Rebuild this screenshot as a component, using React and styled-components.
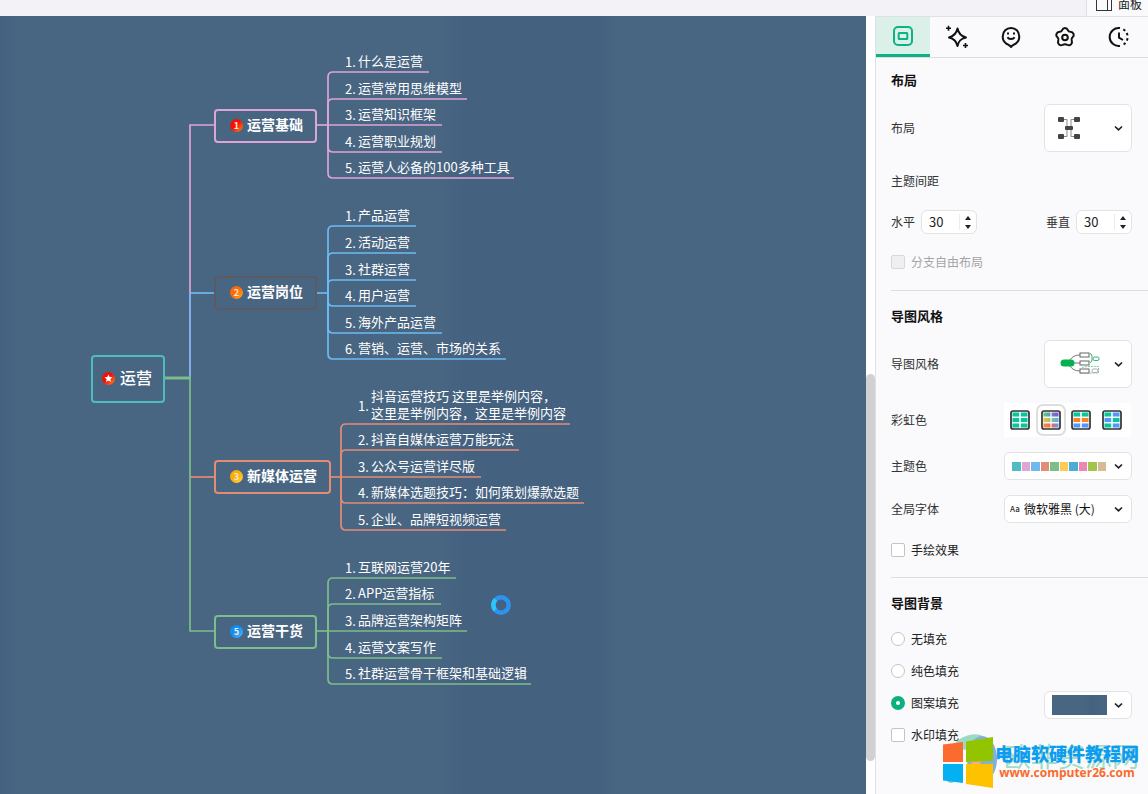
import React, { useState } from "react";
import styled, { createGlobalStyle } from "styled-components";

const GlobalStyle = createGlobalStyle`
  * {
    box-sizing: border-box;
  }
  body {
    margin: 0;
    background: #fafafc;
    color: #333;
    font-family: "Noto Sans CJK SC", "Liberation Sans", sans-serif;
    font-size: 12px;
  }
  button, input, select {
    font: inherit;
    color: inherit;
  }
`;

const Page = styled.div`
  display: flex;
  flex-direction: column;
  min-height: 100vh;
`;

const TopBar = styled.header`
  display: flex;
  justify-content: flex-end;
  align-items: flex-end;
  height: 16px;
  overflow: hidden;
  background: #f3f2f7;
`;

const PanelButton = styled.button`
  display: flex;
  flex-shrink: 0;
  align-items: center;
  gap: 6px;
  height: 25px;
  padding: 0 6px 0 9px;
  border: 0;
  border-left: 1px solid #dfdfe3;
  background: #fafafc;
  color: #222;
`;

const Main = styled.main`
  display: flex;
  flex: 1;
`;

/* ---------- mind map ---------- */

const Canvas = styled.section`
  position: relative;
  flex: 1;
  min-width: 0;
  overflow: hidden;
  background: linear-gradient(
    90deg,
    #446180 0,
    #486582 20px,
    #486582 440px,
    #446180 464px,
    #446180 600px,
    #486582 620px
  );
  color: #fff;
`;

const Lines = styled.svg`
  position: absolute;
  inset: 0;
  width: 100%;
  height: 100%;
  fill: none;
  stroke-width: 1.7;
`;

const Node = styled.div`
  position: absolute;
  left: ${(p) => p.$x}px;
  top: ${(p) => p.$y}px;
  display: flex;
  align-items: center;
  gap: ${(p) => (p.$root ? 5 : 4)}px;
  height: ${(p) => (p.$root ? 48 : 34)}px;
  padding: ${(p) => (p.$root ? "0 11px 1px 9px" : "0 12px 1px 14px")};
  border: 2px solid ${(p) => p.$color};
  border-radius: 4px;
  font-size: ${(p) => (p.$root ? 16 : 14)}px;
  font-weight: ${(p) => (p.$root ? 500 : 700)};
  white-space: nowrap;
`;

const NodeText = styled.span`
  padding-bottom: 3px;
`;

const Badge = styled.span`
  display: flex;
  align-items: center;
  justify-content: center;
  width: 13px;
  height: 13px;
  border-radius: 50%;
  background: linear-gradient(135deg, ${(p) => p.$from} 45%, ${(p) => p.$to});
  color: #ffe9dc;
  font-size: 9px;
  font-weight: 700;
  line-height: 13px;
`;

const Leaf = styled.div`
  position: absolute;
  left: ${(p) => p.$x}px;
  top: ${(p) => p.$y}px;
  display: flex;
  align-items: center;
  height: ${(p) => p.$h}px;
  font-size: 13px;
  line-height: 17px;
  white-space: pre;
`;

const LeafNumber = styled.span`
  width: 13px;
  padding-top: 2px;
`;

const Busy = styled.svg`
  position: absolute;
  left: 490px;
  top: 578px;
`;

const ScrollTrack = styled.div`
  display: flex;
  flex-direction: column;
  width: 9px;
  padding-top: 358px;
  background: #fff;
`;

const ScrollThumb = styled.div`
  height: 387px;
  border-radius: 5px;
  background: #d1d1d4;
`;

/* ---------- side panel ---------- */

const Side = styled.aside`
  position: relative;
  width: 273px;
  border-left: 1px solid #e1e1e5;
  background: #fafafc;
`;

const Tabs = styled.nav`
  display: flex;
  height: 42px;
  border-top: 1px solid #e1e1e5;
  border-bottom: 1px solid #dedee2;
`;

const Tab = styled.button`
  display: flex;
  align-items: center;
  justify-content: center;
  width: 54px;
  padding: 3px 0 0;
  border: 0;
  border-bottom: 3px solid ${(p) => (p.$active ? "#0ab380" : "transparent")};
  background: ${(p) => (p.$active ? "#dcf0ea" : "none")};
  color: ${(p) => (p.$active ? "#0bb583" : "#111")};
`;

const Section = styled.section`
  margin-left: 15px;
  padding: 15px 16px 17px 0;
  border-bottom: 1px solid #dedee2;
  &:first-of-type {
    padding: 12px 16px 18px 0;
  }
  &:last-of-type {
    border-bottom: 0;
  }
`;

const Title = styled.h2`
  margin: 0;
  color: #111;
  font-size: 13px;
  font-weight: 700;
  line-height: 20px;
`;

const Row = styled.div`
  display: flex;
  align-items: center;
  justify-content: space-between;
  min-height: 20px;
  margin-top: ${(p) => p.$gap || 15}px;
  line-height: 20px;
`;

const FillRow = styled(Row)`
  align-items: flex-end;
  height: 32px;
  margin-top: 0;
`;

const Field = styled.div`
  display: flex;
  align-items: center;
  gap: 6px;
`;

const Stepper = styled.div`
  display: flex;
  width: 56px;
  height: 24px;
  border: 1px solid #e3e3e6;
  border-radius: 6px;
  background: #fff;
`;

const StepInput = styled.input`
  flex: 1;
  min-width: 0;
  margin: 3px 0;
  padding: 0 0 0 7px;
  border: 0;
  border-right: 1px solid #ececef;
  background: none;
  color: #222;
  font-size: 13px;
  outline: 0;
`;

const StepButtons = styled.div`
  display: flex;
  flex-direction: column;
  width: 16px;
  padding: 2px 0;
`;

const StepButton = styled.button`
  display: flex;
  flex: 1;
  align-items: center;
  justify-content: center;
  padding: 0;
  border: 0;
  background: none;
`;

const Picker = styled.button`
  display: flex;
  align-items: center;
  justify-content: space-between;
  width: ${(p) => (p.$wide ? 128 : 88)}px;
  height: ${(p) => (p.$tall ? 48 : 28)}px;
  padding: 0 8px 0 ${(p) => (p.$tall ? 13 : 7)}px;
  border: 1px solid #e3e3e6;
  border-radius: 6px;
  background: #fff;
  color: #222;
`;

const FontBox = styled.div`
  display: flex;
  align-items: center;
  width: 128px;
  height: 28px;
  padding: 0 8px 0 5px;
  border: 1px solid #e3e3e6;
  border-radius: 6px;
  background: #fff;
  color: #111;
`;

const FontMark = styled.span`
  width: 14px;
  color: #333;
  font-size: 8px;
  font-weight: 500;
`;

const FontSelect = styled.select`
  flex: 1;
  min-width: 0;
  padding: 0;
  border: 0;
  appearance: none;
  background: none;
  outline: 0;
`;

const Swatches = styled.span`
  display: flex;
  gap: 1px;
  width: 94px;
  height: 9px;
`;

const Swatch = styled.span`
  flex: 1;
  background: ${(p) => p.$color};
`;

const Pattern = styled.span`
  width: 55px;
  height: 20px;
  background: linear-gradient(90deg, #486582 60%, #446180 70%, #486582);
`;

const RainbowGroup = styled.div`
  display: flex;
  justify-content: space-between;
  width: 127px;
  height: 34px;
  margin-right: 1px;
  padding: 1px 4px 1px 1px;
  background: #fff;
`;

const RainbowItem = styled.label`
  position: relative;
  display: flex;
  align-items: center;
  justify-content: center;
  width: 30px;
  border: 2px solid ${(p) => (p.$active ? "#dededf" : "transparent")};
  border-radius: 7px;
`;

const HiddenRadio = styled.input`
  position: absolute;
  inset: 0;
  margin: 0;
  opacity: 0;
`;

const Check = styled.label`
  display: flex;
  align-items: center;
  gap: 6px;
  height: ${(p) => (p.$fill ? 32 : 20)}px;
  color: ${(p) => (p.$muted ? "#a4a4a6" : "#222")};
`;

const Box = styled.input`
  appearance: none;
  width: 14px;
  height: 14px;
  margin: 0;
  border: 1px solid #c4c4c8;
  border-radius: ${(p) => (p.type === "radio" ? "50%" : "2px")};
  background: #fff;
  &:disabled {
    border-color: #d8d8da;
    background: #efefef;
  }
  &:checked {
    border: 5px solid #0cb07c;
  }
`;

const Watermark = styled.div`
  position: absolute;
  right: 9px;
  top: 716px;
  display: flex;
  align-items: flex-start;
  gap: 2px;
  pointer-events: none;
`;

const WatermarkText = styled.div`
  position: relative;
  display: flex;
  flex-direction: column;
  align-items: center;
  padding-top: 10px;
  white-space: nowrap;
`;

const WatermarkGhost = styled.span`
  position: absolute;
  right: 0;
  top: 8px;
  color: #a3dcc6;
  font-size: 27px;
  line-height: 32px;
`;

const WatermarkName = styled.strong`
  position: relative;
  color: #0d9df0;
  font-size: 18px;
  font-weight: 900;
  line-height: 22px;
`;

const WatermarkUrl = styled.strong`
  position: relative;
  color: #fa6a2c;
  font-family: "Open Sans", "Liberation Sans", sans-serif;
  font-size: 12px;
  line-height: 18px;
`;

const pink = "#dda5d5";
const blue = "#6cbaf2";
const orange = "#e38c74";
const green = "#7dbd8a";
const teal = "#4fbdbf";

// y is the underline of a leaf, end is where that underline stops
const branches = [
  {
    title: "运营基础", mark: "1", from: "#f01208", to: "#ff8a1c",
    color: pink, top: 93, right: 317, spine: 328, mid: 109,
    leaves: [
      { text: "什么是运营", y: 56, end: 429 },
      { text: "运营常用思维模型", y: 83, end: 467 },
      { text: "运营知识框架", y: 109, end: 442 },
      { text: "运营职业规划", y: 136, end: 442 },
      { text: "运营人必备的100多种工具", y: 162, end: 514 },
    ],
  },
  {
    title: "运营岗位", mark: "2", from: "#fb6a08", to: "#ffae1c",
    color: blue, border: "#5a5b65", top: 260, right: 317, spine: 328, mid: 277,
    leaves: [
      { text: "产品运营", y: 210, end: 416 },
      { text: "活动运营", y: 237, end: 416 },
      { text: "社群运营", y: 264, end: 416 },
      { text: "用户运营", y: 290, end: 416 },
      { text: "海外产品运营", y: 317, end: 442 },
      { text: "营销、运营、市场的关系", y: 343, end: 506 },
    ],
  },
  {
    title: "新媒体运营", mark: "3", from: "#fbae08", to: "#ffd84a",
    color: orange, top: 444, right: 331, spine: 341, mid: 461,
    leaves: [
      { text: "抖音运营技巧 这里是举例内容，\n这里是举例内容，这里是举例内容", y: 408, end: 570, lines: 2 },
      { text: "抖音自媒体运营万能玩法", y: 434, end: 519 },
      { text: "公众号运营详尽版", y: 461, end: 481 },
      { text: "新媒体选题技巧：如何策划爆款选题", y: 487, end: 584 },
      { text: "企业、品牌短视频运营", y: 514, end: 506 },
    ],
  },
  {
    title: "运营干货", mark: "5", from: "#0d8ff5", to: "#56bbff",
    color: green, top: 599, right: 317, spine: 328, mid: 615,
    leaves: [
      { text: "互联网运营20年", y: 562, end: 456 },
      { text: "APP运营指标", y: 588, end: 441 },
      { text: "品牌运营架构矩阵", y: 615, end: 467 },
      { text: "运营文案写作", y: 642, end: 442 },
      { text: "社群运营骨干框架和基础逻辑", y: 668, end: 531 },
    ],
  },
];

const leafPath = (b, leaf) => {
  if (Math.abs(leaf.y - b.mid) < 3) return `M${b.spine} ${leaf.y}H${leaf.end}`;
  const bend = leaf.y < b.mid ? 5 : -5;
  return `M${b.spine} ${b.mid}V${leaf.y + bend}Q${b.spine} ${leaf.y} ${b.spine + 5} ${leaf.y}H${leaf.end}`;
};

const MindMap = () => (
  <Canvas>
    <Lines>
      <path d="M190 362V109H214" stroke={pink} />
      <path d="M190 362V277" stroke="#86acea" strokeWidth="2" />
      <path d="M190 277H214" stroke={blue} />
      <path d="M190 461H214" stroke={orange} />
      <path d="M190 362V615H214" stroke={green} />
      <path d="M165 362H191" stroke={green} strokeWidth="3" />
      {branches.map((b) => (
        <g key={b.title} stroke={b.color}>
          <path d={`M${b.right} ${b.mid}H${b.spine}`} />
          {b.leaves.map((leaf) => (
            <path key={leaf.y} d={leafPath(b, leaf)} />
          ))}
        </g>
      ))}
    </Lines>
    <Node $root $x={91} $y={339} $color={teal}>
      <Badge $from="#f01208" $to="#ff8a1c">
        <svg width="9" height="9" viewBox="0 0 10 10" fill="#fff">
          <path d="M5 .5l1.3 2.9 3.1.3-2.3 2.1.7 3.1L5 7.3 2.2 8.9l.7-3.1L.6 3.7l3.1-.3z" />
        </svg>
      </Badge>
      <NodeText>运营</NodeText>
    </Node>
    {branches.map((b) => (
      <React.Fragment key={b.title}>
        <Node $x={214} $y={b.top} $color={b.border || b.color}>
          <Badge $from={b.from} $to={b.to}>{b.mark}</Badge>
          <NodeText>{b.title}</NodeText>
        </Node>
        {b.leaves.map((leaf, i) => {
          const height = leaf.lines === 2 ? 36 : 20;
          return (
            <Leaf key={leaf.y} $x={b.spine + 17} $y={leaf.y - height - 2} $h={height}>
              <LeafNumber>{i + 1}.</LeafNumber>
              <span>{leaf.text}</span>
            </Leaf>
          );
        })}
      </React.Fragment>
    ))}
    <Busy width="22" height="22" viewBox="0 0 22 22" fill="none" strokeWidth="4.5">
      <circle cx="11" cy="11" r="7.7" stroke="#2c93ef" />
      <path d="M5.2 16A7.7 7.7 0 0 1 5.6 5.5" stroke="#2cc6f8" />
    </Busy>
  </Canvas>
);

const Chevron = () => (
  <svg width="9" height="7" viewBox="0 0 9 7" fill="none" stroke="#222" strokeWidth="1.7">
    <path d="M1 1.5l3.5 3.3L8 1.5" />
  </svg>
);

const tabs = [
  {
    name: "布局",
    icon: (
      <>
        <rect x="2" y="1" width="18" height="18" rx="4" />
        <rect x="6.7" y="7" width="8.6" height="6" rx=".5" />
      </>
    ),
  },
  {
    name: "主题",
    icon: (
      <>
        <path d="M11.5 2.5c1 5 3 7.5 8.5 9-5.5 1.3-7.5 3.5-8.5 8.5-1-5-3.500-7.200-8.500-8.500 5-1.500 7.500-4 8.500-9z" strokeLinejoin="round" />
        <path d="M2.500-.2v5M0 2.300h5M19.500 17v5M17 19.500h5" strokeWidth="1.600" />
      </>
    ),
  },
  {
    name: "图标",
    icon: (
      <>
        <path d="M11 21c-1-1.600-3-2.300-4.700-3.400A8.200 8.200 0 0 1 2.800 10 8 8 0 0 1 11 2a8 8 0 0 1 8.200 8 8.200 8.200 0 0 1-3.500 7.600C14 18.700 12 19.400 11 21z" strokeLinejoin="round" />
        <path d="M7.500 11.200c1.200 2.500 5.800 2.500 7 0" />
        <path d="M8 6.500v2M14 6.500v2" />
      </>
    ),
  },
  {
    name: "样式",
    icon: (
      <>
        <path d="M8 4.300c1.200-3 4.800-3 6 0 .4 1 1.200 1.500 2.300 1.500 3.300.1 4.600 3.500 2.300 5.500-.9.800-1.200 1.700-.9 2.800 1.200 3.800-1.500 6-4.300 4.800-1.500-.7-3.300-.7-4.800 0-2.800 1.200-5.500-1-4.300-4.800.3-1.100 0-2-.9-2.800C1.100 9.300 2.400 5.900 5.700 5.800 6.800 5.800 7.600 5.300 8 4.300z" />
        <circle cx="11" cy="11.500" r="2.800" />
      </>
    ),
  },
  {
    name: "历史",
    icon: (
      <>
        <path d="M12 2.100a9 9 0 1 0 0 17.800" />
        <path d="M15.300 3.300a9 9 0 0 1 .1 15.300" strokeDasharray="2.500 2.600" />
        <path d="M11 6.500v5.200l4 2.300" />
      </>
    ),
  },
];

const Tile = ({ id, fills }) => (
  <svg width="20" height="20" viewBox="0 0 20 20">
    <defs>
      <linearGradient id={`${id}-a`}><stop offset="0" stopColor="#4fcf87" /><stop offset="1" stopColor="#8d4be0" /></linearGradient>
      <linearGradient id={`${id}-b`}><stop offset="0" stopColor="#efc52c" /><stop offset="1" stopColor="#45b3f5" /></linearGradient>
      <linearGradient id={`${id}-c`}><stop offset="0" stopColor="#ff8a3c" /><stop offset=".5" stopColor="#f4644e" /><stop offset="1" stopColor="#6f95f5" /></linearGradient>
    </defs>
    <rect x="1" y="1" width="18" height="18" rx="2" fill="#eefaf7" stroke="#333" strokeWidth="1.7" />
    {fills.map(([left, right], i) => (
      <g key={i}>
        {left === "rainbow" ? (
          <rect x="2.5" y={2.5 + i * 5.5} width="15" height="4" fill={`url(#${id}-${"abc"[i]})`} />
        ) : (
          <>
            <rect x="2.5" y={2.5 + i * 5.5} width="7" height="4" fill={left} />
            <rect x="10.5" y={2.5 + i * 5.5} width="7" height="4" fill={right} />
          </>
        )}
      </g>
    ))}
    <path d="M10 2v16" stroke="#fff" strokeWidth="1.2" />
  </svg>
);

const mint = "#08c59c";
const sky = "#5795fb";
const amber = "#ff8322";
const rainbows = [
  { name: "单色", fills: [[mint, mint], [mint, mint], [mint, mint]] },
  { name: "彩虹", fills: [["rainbow"], ["rainbow"], ["rainbow"]] },
  { name: "三色", fills: [[mint, mint], [amber, amber], [sky, sky]] },
  { name: "双色", fills: [[mint, sky], [sky, mint], [mint, sky]] },
];

const themeColors = [
  "#4fbdbf", "#dfa6d3", "#6fb9ee", "#e38c74", "#7dbd8a",
  "#fdca55", "#4badd3", "#ec86b4", "#a0c44c", "#d7bb93",
];

const NumberField = ({ id, label }) => {
  const [value, setValue] = useState(30);
  return (
    <Field>
      <label htmlFor={id}>{label}</label>
      <Stepper>
        <StepInput id={id} value={value} onChange={(e) => setValue(Number(e.target.value) || 0)} />
        <StepButtons>
          <StepButton aria-label={`${label}+`} onClick={() => setValue(value + 1)}>
            <svg width="6" height="4" viewBox="0 0 6 4"><path d="M0 4l3-4 3 4z" fill="#222" /></svg>
          </StepButton>
          <StepButton aria-label={`${label}-`} onClick={() => setValue(value - 1)}>
            <svg width="6" height="4" viewBox="0 0 6 4"><path d="M0 0l3 4 3-4z" fill="#222" /></svg>
          </StepButton>
        </StepButtons>
      </Stepper>
    </Field>
  );
};

const LayoutIcon = () => (
  <svg width="22" height="22" viewBox="0 0 22 22">
    <path d="M5 2.5h4v17H5M17 2.5h-4v17h4" fill="none" stroke="#888" />
    <g fill="#444">
      <rect x="0" y="0" width="6" height="5" rx="1" />
      <rect x="16" y="0" width="6" height="5" rx="1" />
      <rect x="0" y="17" width="6" height="5" rx="1" />
      <rect x="16" y="17" width="6" height="5" rx="1" />
      <rect x="7" y="9" width="8" height="4" rx="1" />
    </g>
  </svg>
);

const StyleIcon = () => (
  <svg width="42" height="24" viewBox="0 0 42 24" fill="none">
    <path d="M12 8Q15 3 22 3M14 11h8M12 14Q15 19 22 19" stroke="#777" />
    <path d="M24 15.5Q30 14 40.5 14.5V21H22" stroke="#6cc795" strokeDasharray="2 1" />
    <path d="M32 1.5q2 0 2 3v3q0 3-2 3" stroke="#2fb36e" />
    <rect x="2.5" y="7.5" width="14" height="7" rx="3.5" fill="#06b050" />
    <g fill="#fff">
      <rect x="22" y="1" width="9" height="4" stroke="#666" />
      <rect x="22" y="9" width="9" height="4" stroke="#666" />
      <rect x="22" y="17" width="9" height="4" stroke="#666" />
      <rect x="35" y="5" width="6" height="3.5" rx="1.5" stroke="#2fb36e" />
      <rect x="34" y="17" width="6" height="3.5" rx="1.5" stroke="#aaa" />
    </g>
  </svg>
);

const SidePanel = () => {
  const [tab, setTab] = useState("布局");
  const [rainbow, setRainbow] = useState("彩虹");
  const [fill, setFill] = useState("图案填充");

  return (
    <Side>
      <Tabs>
        {tabs.map((t) => (
          <Tab key={t.name} $active={t.name === tab} aria-label={t.name} onClick={() => setTab(t.name)}>
            <svg width="22" height="22" viewBox="0 0 22 22" fill="none" stroke="currentColor" strokeWidth="2" overflow="visible">
              {t.icon}
            </svg>
          </Tab>
        ))}
      </Tabs>
      <Section>
        <Title>布局</Title>
        <Row $gap={14}>
          <span>布局</span>
          <Picker $tall aria-label="布局" aria-haspopup="listbox"><LayoutIcon /><Chevron /></Picker>
        </Row>
        <Row $gap={19}>主题间距</Row>
        <Row $gap={19}>
          <NumberField id="gap-x" label="水平" />
          <NumberField id="gap-y" label="垂直" />
        </Row>
        <Row $gap={18}>
          <Check $muted><Box type="checkbox" disabled />分支自由布局</Check>
        </Row>
      </Section>
      <Section>
        <Title>导图风格</Title>
        <Row $gap={14}>
          <span>导图风格</span>
          <Picker $tall aria-label="导图风格" aria-haspopup="listbox"><StyleIcon /><Chevron /></Picker>
        </Row>
        <Row>
          <span>彩虹色</span>
          <RainbowGroup role="radiogroup" aria-label="彩虹色">
            {rainbows.map((r, i) => (
              <RainbowItem key={r.name} $active={r.name === rainbow}>
                <HiddenRadio
                  type="radio"
                  name="rainbow"
                  aria-label={r.name}
                  checked={r.name === rainbow}
                  onChange={() => setRainbow(r.name)}
                />
                <Tile id={`tile${i}`} fills={r.fills} />
              </RainbowItem>
            ))}
          </RainbowGroup>
        </Row>
        <Row>
          <span>主题色</span>
          <Picker $wide aria-label="主题色" aria-haspopup="listbox">
            <Swatches>
              {themeColors.map((c) => <Swatch key={c} $color={c} />)}
            </Swatches>
            <Chevron />
          </Picker>
        </Row>
        <Row>
          <label htmlFor="font">全局字体</label>
          <FontBox>
            <FontMark>Aa</FontMark>
            <FontSelect id="font">
              <option>微软雅黑 (大)</option>
            </FontSelect>
            <Chevron />
          </FontBox>
        </Row>
        <Row $gap={17}>
          <Check><Box type="checkbox" />手绘效果</Check>
        </Row>
      </Section>
      <Section>
        <Title>导图背景</Title>
        <Row $gap={10}>
          <Check $fill>
            <Box type="radio" name="fill" checked={fill === "无填充"} onChange={() => setFill("无填充")} />
            无填充
          </Check>
        </Row>
        <FillRow>
          <Check $fill>
            <Box type="radio" name="fill" checked={fill === "纯色填充"} onChange={() => setFill("纯色填充")} />
            纯色填充
          </Check>
        </FillRow>
        <FillRow>
          <Check $fill>
            <Box type="radio" name="fill" checked={fill === "图案填充"} onChange={() => setFill("图案填充")} />
            图案填充
          </Check>
          <Picker aria-label="图案" aria-haspopup="listbox"><Pattern /><Chevron /></Picker>
        </FillRow>
        <FillRow>
          <Check $fill><Box type="checkbox" />水印填充</Check>
        </FillRow>
      </Section>
      <Watermark>
        <svg width="50" height="56" viewBox="0 0 50 56" overflow="visible">
          <ellipse cx="27" cy="10" rx="15" ry="7" fill="#9bd9c1" transform="rotate(-14 27 10)" />
          <ellipse cx="39" cy="27" rx="15" ry="23" fill="#80b0dd" />
          <circle cx="33" cy="29" r="5" fill="#f4ac86" />
          <circle cx="8" cy="46" r="5" fill="#8ad3b4" />
          <path d="M0 12.5l20-2.500v20H0z" fill="#fb6a2f" />
          <path d="M23 9.500L50 5v24l-27 1z" fill="#92c400" />
          <path d="M0 32h20v19L0 48.500z" fill="#03b1f2" />
          <path d="M23 32h27v24l-27-4z" fill="#ffc200" />
        </svg>
        <WatermarkText>
          <WatermarkGhost>欧菲资源网</WatermarkGhost>
          <WatermarkName>电脑软硬件教程网</WatermarkName>
          <WatermarkUrl>www.computer26.com</WatermarkUrl>
        </WatermarkText>
      </Watermark>
    </Side>
  );
};

const App = () => {
  return (
    <>
      <GlobalStyle />
      <Page>
        <TopBar>
          <PanelButton>
            <svg width="16" height="16" viewBox="0 0 16 16" fill="none" stroke="#333">
              <rect x=".5" y=".5" width="15" height="14" />
              <path d="M11.5 .5v14" />
            </svg>
            面板
          </PanelButton>
        </TopBar>
        <Main>
          <MindMap />
          <ScrollTrack>
            <ScrollThumb />
          </ScrollTrack>
          <SidePanel />
        </Main>
      </Page>
    </>
  );
};

export default App;
